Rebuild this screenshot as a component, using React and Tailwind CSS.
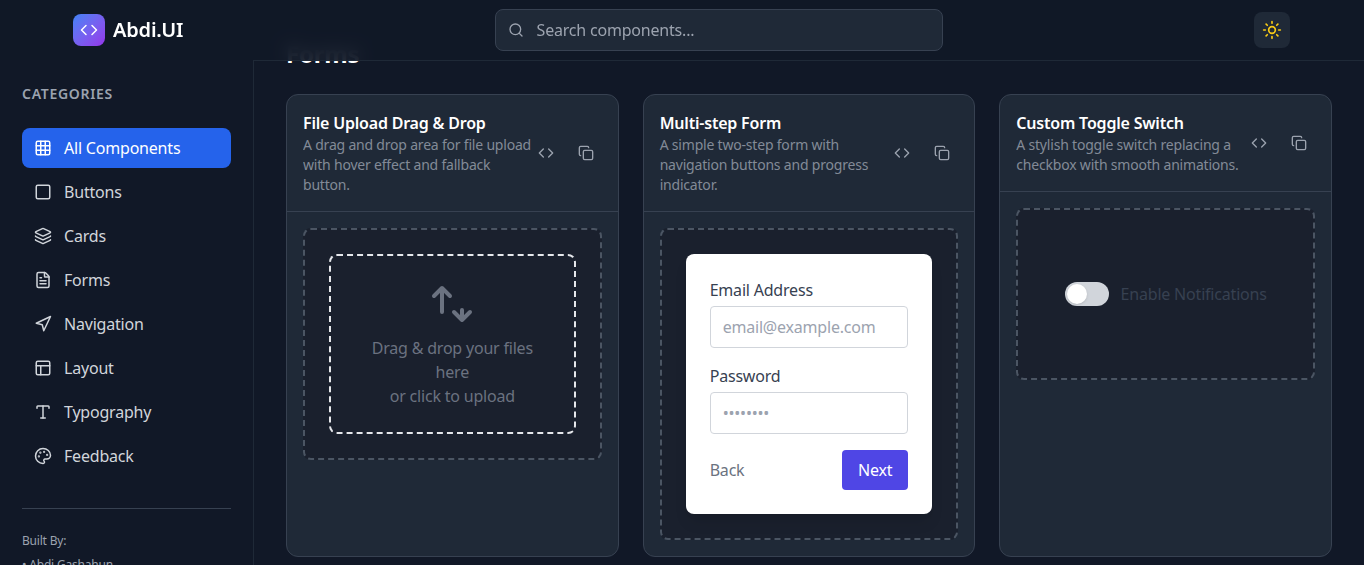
import React from "react";
import { Grid3x3, Square, Layers, FileText, Navigation, PanelsTopLeft, Type, Palette, Code, Copy, Search, Sun } from "lucide-react";

const nav = [
  [Grid3x3, "All Components", true],
  [Square, "Buttons"],
  [Layers, "Cards"],
  [FileText, "Forms"],
  [Navigation, "Navigation"],
  [PanelsTopLeft, "Layout"],
  [Type, "Typography"],
  [Palette, "Feedback"],
];

function Card({ title, lines, children }) {
  return (
    <div className="flex flex-col rounded-xl border border-[#374151] bg-[#1f2937]">
      <div className="flex items-center justify-between border-b border-[#374151] p-4">
        <div className="min-w-0 flex-1">
          <h3 className="text-base font-semibold text-white">{title}</h3>
          <p className="text-sm text-[#9ca3af] opacity-80">
            {lines.map((l) => (
              <span key={l} className="block whitespace-nowrap">{l}</span>
            ))}
          </p>
        </div>
        <div className="flex gap-2 text-[#9ca3af]">
          <span className="p-2"><Code size={16} /></span>
          <span className="p-2"><Copy size={16} /></span>
        </div>
      </div>
      <div className="p-4">{children}</div>
    </div>
  );
}

const boxCls = "rounded-lg border-2 border-dashed border-[#4b5563] bg-[#1a202d] p-6";

export default function App() {
  return (
    <div className="relative flex h-[565px] overflow-hidden bg-[#111827] font-['Noto_Sans',sans-serif] tracking-[-0.2px]">
      <header className="absolute inset-x-0 top-0 z-10 h-[61px] border-b border-[#1f2937] bg-[#111827]/90 backdrop-blur">
        <div className="mx-auto flex h-[60px] max-w-7xl items-center justify-between pl-[31px] pr-8">
          <div className="relative z-30 flex items-center gap-2">
            <div className="flex h-8 w-8 items-center justify-center rounded-lg bg-gradient-to-br from-[#3b82f6] to-[#9333ea] text-white">
              <Code size={18} />
            </div>
            <span className="text-xl font-semibold text-white">Abdi.UI</span>
          </div>
          <div className="flex h-[42px] w-[448px] items-center gap-[13px] rounded-lg border border-[#374151] bg-[#1f2937] pl-3 text-[#9ca3af]">
            <Search size={16} />
            <span>Search components...</span>
          </div>
          <div className="flex h-9 w-9 items-center justify-center rounded-lg bg-[#1f2937] text-[#facc15]">
            <Sun size={20} />
          </div>
        </div>
      </header>

      <aside className="relative z-20 mt-[60px] w-[254px] shrink-0 border-r border-[#1f2937] bg-[#111827] px-[22px] pt-6">
        <h2 className="mb-6 text-sm font-semibold uppercase tracking-wider text-[#9ca3af]">Categories</h2>
        <nav className="flex flex-col gap-1">
          {nav.map(([Icon, label, active]) => (
            <div
              key={label}
              className={
                active
                  ? "flex items-center gap-3 rounded-lg bg-[#2563eb] px-3 py-2 text-white"
                  : "flex items-center gap-3 rounded-lg px-3 py-2 text-[#d1d5db]"
              }
            >
              <Icon size={18} />
              <span>{label}</span>
            </div>
          ))}
        </nav>
        <div className="mt-8 border-t border-[#374151] pt-6 text-xs text-[#9ca3af]">
          <p className="mb-2">Built By:</p>
          <p>• Abdi Gashahun</p>
        </div>
      </aside>

      <main className="min-w-0 flex-1 px-8 pt-[38px]">
        <h1 className="mb-6 text-2xl font-bold text-white">Forms</h1>
        <div className="grid grid-cols-3 gap-6">
          <Card title="File Upload Drag & Drop" lines={["A drag and drop area for file upload", "with hover effect and fallback", "button."]}>
            <div className={boxCls}>
              <div className="flex flex-col items-center rounded-lg border-2 border-dashed border-[#e5e7eb] p-6 text-center text-[#6b7280]">
                <svg className="mb-2 h-12 w-12" viewBox="0 0 24 24" fill="none" stroke="currentColor" strokeWidth="2" strokeLinecap="round" strokeLinejoin="round">
                  <path d="M7 16V4m0 0L3 8m4-4l4 4" />
                  <path d="M17 15v5m0 0l4-4m-4 4l-4-4" />
                </svg>
                <p>Drag &amp; drop your files here</p>
                <p>or click to upload</p>
              </div>
            </div>
          </Card>

          <Card title="Multi-step Form" lines={["A simple two-step form with", "navigation buttons and progress", "indicator."]}>
            <div className={boxCls}>
              <div className="rounded-lg bg-white p-6 shadow-lg">
                <div className="mb-1 text-[#374151]">Email Address</div>
                <div className="mb-4 rounded border border-[#d1d5db] px-3 py-2 text-[#9ca3af]">email@example.com</div>
                <div className="mb-1 text-[#374151]">Password</div>
                <div className="mb-4 rounded border border-[#d1d5db] px-3 py-2 text-[#9ca3af]">••••••••</div>
                <div className="flex items-center justify-between">
                  <span className="text-[#6b7280]">Back</span>
                  <span className="rounded bg-[#4f46e5] px-4 py-2 text-white">Next</span>
                </div>
              </div>
            </div>
          </Card>

          <Card title="Custom Toggle Switch" lines={["A stylish toggle switch replacing a", "checkbox with smooth animations."]}>
            <div className={boxCls + " flex min-h-[172px] items-center justify-center gap-3"}>
              <div className="flex h-6 w-11 items-center rounded-full bg-[#d1d5db] px-0.5">
                <div className="h-5 w-5 rounded-full bg-white shadow" />
              </div>
              <span className="text-[#374151]">Enable Notifications</span>
            </div>
          </Card>
        </div>
      </main>
    </div>
  );
}
